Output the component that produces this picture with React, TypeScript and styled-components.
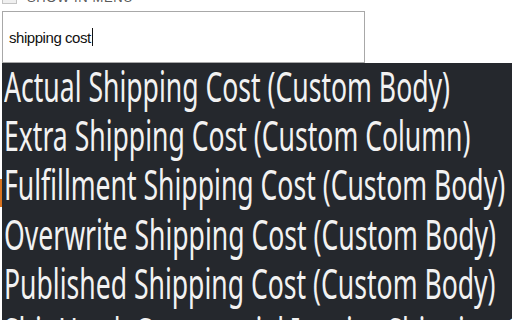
import React from "react";
import styled, { createGlobalStyle } from "styled-components";

const Global = createGlobalStyle`
  html, body { margin: 0; padding: 0; background: #ffffff; overflow: hidden; }
  body { width: 512px; height: 320px; font-family: "Liberation Sans", Arial, sans-serif; }
`;

const Page = styled.div`
  position: relative;
  width: 512px;
  height: 320px;
  overflow: hidden;
`;

const Form = styled.div`
  display: flex;
  flex-direction: column;
  margin-top: -8px;
  padding-left: 2px;
`;

const CheckRow = styled.label`
  display: flex;
  align-items: flex-end;
  gap: 10px;
  height: 12px;
  line-height: 12px;
  color: #5a5a5a;
  font-size: 13px;
  letter-spacing: 0.6px;
  text-transform: uppercase;
`;

const Box = styled.span`
  width: 15px;
  height: 13px;
  border: 1px solid #c4c4c4;
  background: #f0f0f0;
  box-sizing: border-box;
`;

const Input = styled.div`
  margin-top: 7px;
  width: 363px;
  height: 52px;
  box-sizing: border-box;
  border: 1px solid #a8a8a8;
  display: flex;
  align-items: center;
  padding: 0 6px;
  font-family: "Liberation Sans", Arial, sans-serif;
  font-size: 15px;
  letter-spacing: -0.45px;
  color: #111;
`;

const Caret = styled.span`
  display: inline-block;
  width: 1px;
  height: 18px;
  background: #111;
  margin-left: 1px;
`;

const Behind = styled.div`
  margin-top: 116px;
  margin-left: -2px;
  width: 12px;
  height: 28px;
  background: #d9731f;
`;

const Dropdown = styled.ul`
  position: absolute;
  left: 2px;
  top: 63px;
  right: 0;
  bottom: 0;
  margin: 0;
  padding: 0;
  list-style: none;
  background: #25282d;
  overflow: hidden;
`;

const Item = styled.li`
  height: 49.2px;
  line-height: 46px;
  padding-left: 2px;
  white-space: nowrap;
`;

const ItemText = styled.span`
  display: inline-block;
  font-family: "Noto Sans", "DejaVu Sans", sans-serif;
  font-size: 41px;
  color: #f2f2f2;
  transform: scaleX(0.648);
  transform-origin: left center;
`;

const items = [
  "Actual Shipping Cost (Custom Body)",
  "Extra Shipping Cost (Custom Column)",
  "Fulfillment Shipping Cost (Custom Body)",
  "Overwrite Shipping Cost (Custom Body)",
  "Published Shipping Cost (Custom Body)",
  "ShipHawk Commercial Invoice Shipping Cost (Custom Body)",
];

export default function App() {
  return (
    <Page>
      <Global />
      <Form>
        <CheckRow>
          <Box />
          Show in menu
        </CheckRow>
        <Input>
          shipping cost
          <Caret />
        </Input>
        <Behind />
      </Form>
      <Dropdown>
        {items.map((t) => (
          <Item key={t}>
            <ItemText>{t}</ItemText>
          </Item>
        ))}
      </Dropdown>
    </Page>
  );
}
